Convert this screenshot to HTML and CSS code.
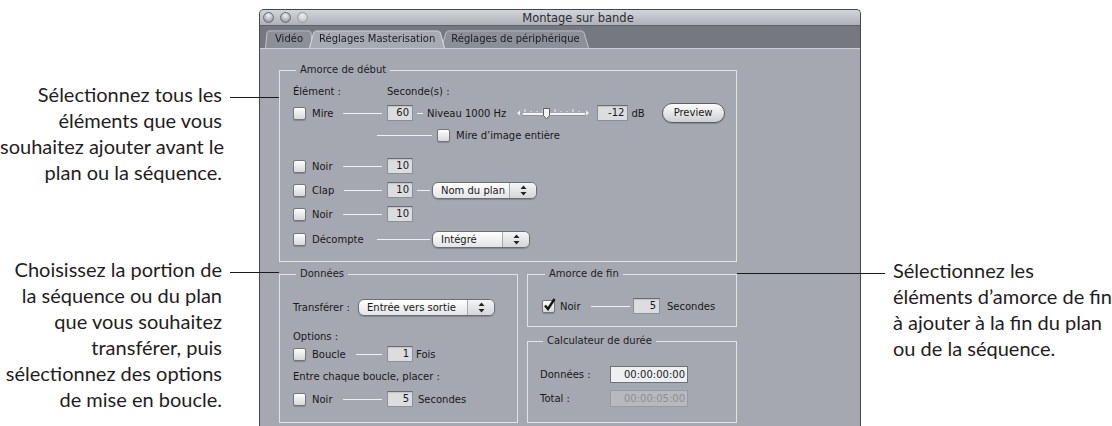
FILE: index.html
```html
<!DOCTYPE html>
<html lang="fr">
<head>
    <meta charset="UTF-8">
    <title>Montage sur bande</title>
    <link rel="stylesheet" href="styles.css">
</head>
<body>
<div class="page">

    <!-- Légendes à gauche -->
    <div class="notes notes-left">
        <p class="note note-start">Sélectionnez tous les<br>éléments que vous<br>souhaitez ajouter avant le<br>plan ou la séquence.</p>
        <p class="note note-data">Choisissez la portion de<br>la séquence ou du plan<br>que vous souhaitez<br>transférer, puis<br>sélectionnez des options<br>de mise en boucle.</p>
    </div>

    <!-- Fenêtre -->
    <div class="window">
        <div class="titlebar">
            <span class="lights"><i></i><i></i><i class="off"></i></span>
            <span class="title">Montage sur bande</span>
        </div>
        <div class="tabs">
            <span class="tab">Vidéo</span>
            <span class="tab active">Réglages Masterisation</span>
            <span class="tab">Réglages de périphérique</span>
        </div>

        <div class="content">
            <fieldset class="group group-start">
                <legend>Amorce de début</legend>
                <div class="row head"><span class="col-a">Élément :</span><span>Seconde(s) :</span></div>
                <div class="row r-mire">
                    <span class="lead"><span class="check"></span>Mire<span class="wire"></span></span>
                    <span class="field">60</span>
                    <span class="wire short"></span>
                    <span>Niveau 1000 Hz</span>
                    <svg class="slider" width="74" height="14" viewBox="0 0 74 14">
                        <path d="M4 4.5L1 7l3 2.5z" fill="#f0f1f4"/>
                        <path d="M70 4.5L73 7l-3 2.5z" fill="#f0f1f4"/>
                        <path d="M9 3v3M15 5v1M21 5v1M27 3v3M33 5v1M39 3v3M45 5v1M51 5v1M57 3v3M63 5v1" stroke="#f0f1f4" stroke-width="1"/>
                        <rect x="7" y="7" width="62" height="2" fill="#f4f5f7"/>
                        <rect x="7" y="9" width="62" height="1" fill="#8d9097"/>
                        <path d="M27.5 2.5h6v7l-3 3.5l-3-3.5z" fill="#f3f3f4" stroke="#5a5c62"/>
                    </svg>
                    <span class="field wide">-12</span>
                    <span class="unit">dB</span>
                    <span class="btn">Preview</span>
                </div>
                <div class="row r-image">
                    <span class="wire fixed"></span><span class="check"></span>Mire d’image entière
                </div>
                <div class="row r-noir1">
                    <span class="lead"><span class="check"></span>Noir<span class="wire"></span></span>
                    <span class="field">10</span>
                </div>
                <div class="row">
                    <span class="lead"><span class="check"></span>Clap<span class="wire"></span></span>
                    <span class="field">10</span>
                    <span class="wire link"></span>
                    <span class="popup p-nom">Nom du plan<span class="arrows"><svg width="7" height="11" viewBox="0 0 7 11"><path d="M3.5 0.5L6.5 4H0.5zM3.5 10.5L6.5 7H0.5z" fill="#222"/></svg></span></span>
                </div>
                <div class="row">
                    <span class="lead"><span class="check"></span>Noir<span class="wire"></span></span>
                    <span class="field">10</span>
                </div>
                <div class="row r-count">
                    <span class="lead lead-long"><span class="check"></span>Décompte<span class="wire"></span></span>
                    <span class="popup p-int">Intégré<span class="arrows"><svg width="7" height="11" viewBox="0 0 7 11"><path d="M3.5 0.5L6.5 4H0.5zM3.5 10.5L6.5 7H0.5z" fill="#222"/></svg></span></span>
                </div>
            </fieldset>

            <div class="bottom">
                <fieldset class="group group-data">
                    <legend>Données</legend>
                    <div class="row">
                        <span class="col-t">Transférer :</span>
                        <span class="popup p-tr">Entrée vers sortie<span class="arrows"><svg width="7" height="11" viewBox="0 0 7 11"><path d="M3.5 0.5L6.5 4H0.5zM3.5 10.5L6.5 7H0.5z" fill="#222"/></svg></span></span>
                    </div>
                    <div class="row r-opt">Options :</div>
                    <div class="row r-loop">
                        <span class="lead"><span class="check"></span>Boucle<span class="wire"></span></span>
                        <span class="field">1</span>
                        <span class="unit">Fois</span>
                    </div>
                    <div class="row r-between">Entre chaque boucle, placer :</div>
                    <div class="row r-black">
                        <span class="lead"><span class="check"></span>Noir<span class="wire"></span></span>
                        <span class="field">5</span>
                        <span class="unit u-sec">Secondes</span>
                    </div>
                </fieldset>

                <div class="side">
                    <fieldset class="group group-end">
                        <legend>Amorce de fin</legend>
                        <div class="row">
                            <span class="lead lead-end"><span class="check on"><svg width="15" height="15" viewBox="0 0 15 15"><path d="M3 7.5l3 3.5l6.5-10" fill="none" stroke="#141414" stroke-width="2.4"/></svg></span>Noir<span class="wire"></span></span>
                            <span class="field">5</span>
                            <span class="unit u-end">Secondes</span>
                        </div>
                    </fieldset>
                    <fieldset class="group group-calc">
                        <legend>Calculateur de durée</legend>
                        <div class="row">
                            <span class="col-c">Données :</span>
                            <span class="tc">00:00:00:00</span>
                        </div>
                        <div class="row r-total">
                            <span class="col-c">Total :</span>
                            <span class="tc off">00:00:05:00</span>
                        </div>
                    </fieldset>
                </div>
            </div>
        </div>
        <div class="foot"></div>
    </div>

    <!-- Légende à droite -->
    <div class="notes notes-right">
        <p class="note note-end">Sélectionnez les<br>éléments d’amorce de fin<br>à ajouter à la fin du plan<br>ou de la séquence.</p>
    </div>

</div>
</body>
</html>
```

FILE: styles.css
```css
* { box-sizing: border-box; }
body { margin: 0; width: 1112px; height: 426px; overflow: hidden; background: #fff; font-family: "DejaVu Sans", sans-serif; }
.page { display: grid; grid-template-columns: 259px 602px 1fr; height: 426px; }

/* légendes */
.notes { font-family: Lato, "Open Sans", sans-serif; font-size: 20px; line-height: 26px; color: #1f1d1e; }
.note { position: relative; z-index: 2; margin: 0; }
.notes-left .note { text-align: right; padding-right: 37px; white-space: nowrap; }
.note-start { margin-top: 81px !important; }
.note-data { margin-top: 71px !important; }
.notes-left .note::after { content: ""; position: absolute; left: 230px; top: 16px; width: 49px; height: 1px; background: #1a1a1a; }
.note-end { margin-top: 257px; padding-left: 32px; white-space: nowrap; }
.note-end::before { content: ""; position: absolute; left: -124px; top: 16px; width: 148px; height: 1px; background: #1a1a1a; }

/* fenêtre */
.window { margin-top: 9px; background: #a5a8b0; border: 1px solid #45474d; border-bottom: none; border-radius: 5px 5px 0 0; display: flex; flex-direction: column; }
.titlebar { height: 15px; display: flex; align-items: center; background: linear-gradient(#d3d5da, #aeb1b9); border-radius: 4px 4px 0 0; }
.lights { display: flex; gap: 6px; padding-left: 3px; }
.lights i { width: 11px; height: 11px; border-radius: 50%; border: 1px solid #6a6c73; background: radial-gradient(circle at 50% 30%, #f3f3f5, #a7aab1 65%, #82858c); }
.lights i.off { border-color: #9a9ca3; background: radial-gradient(circle at 50% 30%, #eceef1, #c3c5ca 70%); }
.title { flex: 1; text-align: center; font-size: 11.5px; color: #2c2c2e; margin-right: 12px; }

.tabs { height: 23px; display: flex; align-items: flex-end; padding-left: 5px; background: #75787f; border-top: 1px solid #5f626a; }
.tab { position: relative; z-index: 0; height: 19px; line-height: 19px; padding: 0 10px; margin-right: -4px; font-size: 10px; color: #1c1c1e; }
.tab::before { content: ""; position: absolute; inset: 0; z-index: -1; background: #8c8f98; border: 1px solid #c2c4ca; border-bottom: none; border-radius: 4px 4px 0 0; transform: perspective(40px) rotateX(9deg); transform-origin: bottom; }
.tab.active { z-index: 1; }
.tab.active::before { background: #a7aab2; border-color: #d8dade; }

.content { border-top: 1px solid #cbcdd2; padding: 15px 0 4px 19px; }
.foot { flex: 1; min-height: 12px; background: linear-gradient(#b8bbc2, #c4c6cc); }

/* groupes */
.group { margin: 0; padding: 0 0 0 13px; border: 1px solid #e1e3e7; min-width: 0; }
.group legend { font-size: 10px; line-height: 12px; padding: 0 4px; margin-left: 3px; color: #1d1d1f; }
.group-start { width: 458px; padding-top: 6px; padding-bottom: 13px; }

.row { display: flex; align-items: center; height: 18px; font-size: 10px; color: #18181a; white-space: nowrap; margin-top: 4px; }
.row.head { margin-top: 0; }
.col-a { width: 94px; }
.r-noir1 { margin-top: 13px; }
.row + .row:not(.r-mire):not(.r-image):not(.r-noir1) { margin-top: 6px; }
.r-count { margin-top: 7px !important; }

.lead { display: flex; align-items: center; width: 94px; flex: none; }
.lead-long { width: 139px; }
.lead-long .wire { margin: 0 2px 0 13px; }
.check { position: relative; width: 13px; height: 13px; flex: none; margin-right: 6px; border: 1px solid #74767c; border-radius: 2px; background: linear-gradient(#fdfdfd, #d6d7da); box-shadow: 0 1px 1px rgba(0, 0, 0, .2); }
.check svg { position: absolute; left: -1px; top: -3px; }
.wire { flex: 1; height: 1px; background: #eef0f3; margin: 0 5px 0 10px; }
.wire.short { flex: none; width: 6px; margin: 0 4px; }
.wire.link { flex: none; width: 13px; margin: 0 2px 0 4px; }
.wire.fixed { flex: none; width: 55px; margin: 0 5px 0 84px; }

.field { width: 26px; height: 16px; flex: none; border: 1px solid #8e9096; border-top-color: #696b71; background: #dcdde0; text-align: right; padding-right: 3px; line-height: 14px; box-shadow: inset 0 1px 1px rgba(0, 0, 0, .12); }
.field.wide { width: 31px; margin-left: 7px; }
.slider { flex: none; margin-left: 10px; }
.unit { margin-left: 3px; }
.btn { width: 63px; height: 20px; margin-left: 17px; border: 1px solid #5c5e65; border-radius: 10px; background: linear-gradient(#fdfdfd, #cdcfd2); text-align: center; line-height: 18px; box-shadow: 0 1px 1px rgba(0, 0, 0, .2); }

.popup { display: flex; align-items: center; height: 17px; flex: none; padding-left: 8px; border: 1px solid #6c6e75; border-radius: 6px; background: linear-gradient(#ffffff, #e3e4e7); box-shadow: 0 1px 1px rgba(0, 0, 0, .2); }
.popup .arrows { display: flex; align-items: center; justify-content: center; width: 27px; height: 100%; margin-left: auto; border-left: 1px solid #a8aaaf; border-radius: 0 5px 5px 0; background: linear-gradient(#f4f5f7, #d4d6da); }
.p-nom { width: 105px; }
.p-int { width: 98px; }
.p-tr { width: 137px; }

/* bas */
.bottom { display: flex; gap: 9px; width: 458px; margin-top: 6px; }
.group-data { width: 239px; padding-top: 14px; padding-bottom: 10px; }
.col-t { width: 65px; }
.group-data .r-opt { margin-top: 11px !important; }
.group-data .r-loop { margin-top: 0 !important; }
.group-data .r-between { margin-top: 4px !important; }
.group-data .r-black { margin-top: 5px !important; }
.u-sec { margin-left: 5px; }

.side { display: flex; flex-direction: column; width: 210px; }
.group-end { padding: 13px 0 11px 14px; }
.lead-end { width: 91px; }
.lead-end .check { margin-right: 5px; }
.lead-end .wire { margin: 0 3px 0 10px; }
.group-end .field { width: 27px; }
.u-end { margin-left: 7px; }
.group-calc { flex: 1; margin-top: 8px; padding: 14px 0 15px 12px; }
.col-c { width: 70px; }
.group-calc .r-total { margin-top: 6px !important; }
.tc { width: 78px; height: 17px; border: 1px solid #6f7176; background: #eeeff1; text-align: right; padding-right: 2px; line-height: 15px; color: #1b1b1d; }
.tc.off { background: #b7b9bf; border-color: #989aa0; color: #8c8e94; }
```
